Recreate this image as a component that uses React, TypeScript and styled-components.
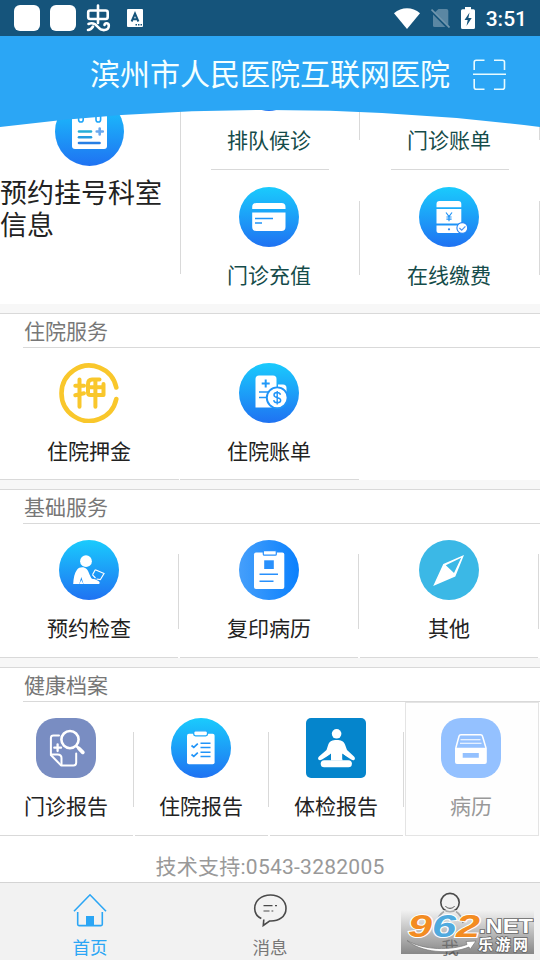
import React from 'react';
import styled, { createGlobalStyle } from 'styled-components';

const Global = createGlobalStyle`
  * { box-sizing: border-box; }
  body { margin: 0; background: #fff; font-family: Roboto, "Noto Sans CJK SC", sans-serif; }
  svg { display: block; }
`;

const LINE = '#d9d9d9';

const Screen = styled.div`
  width: 540px;
  height: 960px;
  display: flex;
  flex-direction: column;
  overflow: hidden;
  background: #fff;
`;

const StatusBar = styled.div`
  flex: none;
  height: 36px;
  display: flex;
  align-items: center;
  justify-content: space-between;
  padding: 0 13px 0 14px;
  background: #15547b;
  color: #fff;
`;

const StatusGroup = styled.div<{ $gap: number }>`
  display: flex;
  align-items: center;
  gap: ${p => p.$gap}px;
`;

const AppTile = styled.span`
  width: 26px;
  height: 26px;
  border-radius: 6px;
  background: #fff;
`;

const LetterSlot = styled.span`
  padding-left: 6px;
`;

const Clock = styled.span`
  font-size: 21px;
  font-weight: 500;
  line-height: 36px;
  padding-top: 2px;
`;

const Header = styled.header`
  position: relative;
  z-index: 1;
  flex: none;
  height: 74px;
  display: flex;
  align-items: center;
  padding: 4px 0 0 90px;
  gap: 23px;
  background: #2ba6f5;
`;

const Title = styled.h1`
  margin: 0;
  width: 360px;
  font-size: 30px;
  line-height: 70px;
  font-weight: 400;
  white-space: nowrap;
  color: #f4ffff;
`;

const Curve = styled.svg`
  position: absolute;
  left: 0;
  top: 73px;
`;

const Content = styled.main`
  flex: 1;
  min-height: 0;
  overflow: hidden;
`;

const Booking = styled.section`
  display: grid;
  grid-template-columns: 180px 360px;
  height: 269px;
  margin-top: -75px;
`;

const MainEntry = styled.div`
  display: flex;
  flex-direction: column;
  align-items: center;
  padding-top: 62px;
  padding-right: 1px;
  gap: 12px;
`;

const MainLabel = styled.div`
  width: 179px;
  font-size: 27px;
  line-height: 32px;
  color: #222;
`;

const BookingGrid = styled.div`
  display: grid;
  grid-template-columns: 180px 180px;
  grid-template-rows: 135px 134px;
  background: linear-gradient(${LINE}, ${LINE}) 0 0 / 1px 239px no-repeat;
`;

const Cell = styled.div<{ $top: number; $inset?: number; $lines: 'both' | 'bottom' | 'booking' | 'right' }>`
  display: flex;
  flex-direction: column;
  align-items: center;
  padding-top: ${p => p.$top}px;
  padding-right: ${p => p.$inset ?? 2}px;
  gap: 12.5px;
  background: ${p => {
    const fill = `linear-gradient(${LINE}, ${LINE})`;
    const bottom = `${fill} 0 100% / calc(100% - 2px) 1px no-repeat`;
    const side = `${fill} calc(100% - 1px) 30px / 1px 75px no-repeat`;
    if (p.$lines === 'both') return `${bottom}, ${side}`;
    if (p.$lines === 'bottom') return `${fill} 0 100% / calc(100% - 1px) 1px no-repeat`;
    if (p.$lines === 'booking') return `${fill} 31px 100% / 118px 1px no-repeat, ${fill} 100% 31px / 1px 74px no-repeat`;
    return `${fill} 100% 31px / 1px 74px no-repeat`;
  }};
`;

const Label = styled.span<{ $color?: string }>`
  font-size: 21px;
  line-height: 32px;
  white-space: nowrap;
  color: ${p => p.$color ?? '#222'};
`;

const Divider = styled.div`
  height: 10px;
  background: #f7f7f7;
  border-bottom: 1px solid ${LINE};
`;

const SectionTitle = styled.h2`
  margin: 0 0 0 23px;
  height: 34px;
  padding-left: 1px;
  border-bottom: 1px solid ${LINE};
  font-size: 21px;
  line-height: 37px;
  font-weight: 400;
  color: #777;
`;

const Row = styled.div<{ $cols: number; $h: number }>`
  display: grid;
  grid-template-columns: repeat(${p => p.$cols}, 1fr);
  height: ${p => p.$h}px;
`;

const DisabledCell = styled.div`
  display: flex;
  flex-direction: column;
  align-items: center;
  gap: 12.5px;
  padding: 15px 2px 0 0;
  margin-right: 1px;
  border: 1px solid #e4e4e4;
  background: #fefefe;
`;

const Support = styled.p`
  margin: 0;
  padding-top: 1px;
  text-align: center;
  font-size: 21px;
  line-height: 60px;
  letter-spacing: 0.25px;
  color: #999;
`;

const TabBar = styled.nav`
  position: relative;
  flex: none;
  height: 78px;
  display: grid;
  grid-template-columns: repeat(3, 180px);
  border-top: 1px solid #d4d4d4;
  background: #f2f2f2;
`;

const Tab = styled.div<{ $active?: boolean }>`
  display: flex;
  flex-direction: column;
  align-items: center;
  padding-top: 8px;
  gap: 8px;
  font-size: 17.5px;
  line-height: 26px;
  color: ${p => (p.$active ? '#2ba6f5' : '#777')};
`;

const Watermark = styled.div`
  position: absolute;
  left: 401px;
  top: 27px;
  width: 133px;
  height: 44px;
  background: linear-gradient(rgba(242, 242, 242, 0.6), rgba(70, 70, 70, 0.62));
`;

type Kids = { children?: React.ReactNode };

const Gradient = ({ id, from = '#1acbfd', to = '#1f72f2', flat = false }: { id: string; from?: string; to?: string; flat?: boolean }) => (
  <defs>
    <linearGradient id={id} x1="0" y1="0" x2={flat ? 1 : 0} y2={flat ? 0 : 1}>
      <stop offset="0" stopColor={from} />
      <stop offset="1" stopColor={to} />
    </linearGradient>
  </defs>
);

const Disc = ({ children }: Kids) => (
  <svg width="60" height="60" viewBox="0 0 60 60" fill="none">
    <Gradient id="disc" />
    <circle cx="30" cy="30" r="30" fill="url(#disc)" />
    {children}
  </svg>
);

const Tile = ({ color, rx, children }: Kids & { color: string; rx: number }) => (
  <svg width="60" height="60" viewBox="0 0 60 60" fill="none">
    <rect width="60" height="60" rx={rx} fill={color} />
    {children}
  </svg>
);

const CalendarIcon = () => (
  <svg width="69" height="69" viewBox="0 0 69 69" fill="none">
    <Gradient id="cal" />
    <circle cx="34.5" cy="34.5" r="34.5" fill="url(#cal)" />
    <rect x="17" y="17" width="35" height="35" rx="3" fill="#fff" />
    <g fill="#fff" stroke="#1da5f9" strokeWidth="1.6">
      <rect x="23.6" y="13" width="4.6" height="12" rx="2.3" />
      <rect x="41" y="13" width="4.6" height="12" rx="2.3" />
    </g>
    <g strokeWidth="2.6" strokeLinecap="round">
      <path d="M24 34.5H36" stroke="#25aed8" />
      <path d="M24 40.3H36" stroke="#249bdf" />
      <path d="M24 46H44.5" stroke="#287fe4" />
      <path d="M41.7 34.5H47.8M44.7 31.5V37.5" stroke="#69a8ee" />
    </g>
  </svg>
);

const QueueIcon = () => (
  <svg width="60" height="60" viewBox="0 0 60 60">
    <Gradient id="queue" />
    <circle cx="30" cy="29.7" r="29.2" fill="url(#queue)" />
  </svg>
);

const CardIcon = () => (
  <Disc>
    <path d="M13.2 22V20a4 4 0 0 1 4-4H42.5a4 4 0 0 1 4 4V22Z" fill="#fff" />
    <path d="M13.2 25.5H46.5V40a4 4 0 0 1-4 4H17.2a4 4 0 0 1-4-4Z" fill="#fff" />
    <path d="M16 31.5H34M16 36H23" stroke="#2094f8" strokeWidth="1.5" />
  </Disc>
);

const PayIcon = () => (
  <Disc>
    <path d="M17.5 20.3V17a3 3 0 0 1 3-3H39.3a3 3 0 0 1 3 3V20.3ZM17.5 22H42.3V36.5H17.5ZM17.5 38.5H42.3V46H19.5a2 2 0 0 1-2-2Z" fill="#fff" />
    <path d="M27 25.5L30 29.5L33 25.5M30 29.5V34.3M27.4 30H32.6M27.4 32.2H32.6" stroke="#2094f8" strokeWidth="1.2" />
    <circle cx="30" cy="42.3" r="1.1" fill="#2584f5" />
    <circle cx="43.3" cy="41" r="5.4" fill="#fff" stroke="#2584f5" strokeWidth="1.1" />
    <path d="M40.4 41L42.7 43.2L46.4 39.3" stroke="#4b92f2" strokeWidth="1.2" />
  </Disc>
);

const DepositIcon = () => (
  <svg width="60" height="60" viewBox="0 0 60 60" fill="none" stroke="#f9c72b" strokeLinecap="round" strokeLinejoin="round">
    <path d="M57.3 24.5A27.7 27.7 0 1 0 57.3 36" strokeWidth="4.6" />
    <g strokeWidth="4">
      <path d="M20.5 16.5V43.7M16.3 22.7H25M16.3 32.3L25 30.3" />
      <path d="M44.5 21V32H31.5C29.5 32 29 31 29 29.5V21C29 18 30.5 16.5 33 16.5H40.5M29 24.3H44.5M36.4 17V43.7" />
    </g>
  </svg>
);

const BillIcon = () => (
  <Disc>
    <path d="M16.5 44.5V16a3.5 3.5 0 0 1 3.5-3.5H34a3.5 3.5 0 0 1 3.5 3.5V44.5Z" fill="#fff" />
    <path d="M39 21.5H44a3.5 3.5 0 0 1 3.5 3.5V34H39Z" fill="#fff" />
    <path d="M22.7 20.5H30.7M26.7 16.5V24.5" stroke="#2199f8" strokeWidth="2" />
    <path d="M20 29H29M20 34.5H28" stroke="#2094f8" strokeWidth="1.7" />
    <circle cx="38.2" cy="34.8" r="10.4" fill="#fff" stroke="#2094f8" strokeWidth="1.9" />
    <path d="M41.5 31.7C41 30 39.8 29.5 38.2 29.5C36.3 29.5 35 30.5 35 32C35 35.8 41.7 33.6 41.7 37.3C41.7 39 40.2 39.8 38.2 39.8C36.3 39.8 35 38.9 34.7 37.2M38.2 28V41.5" stroke="#2094f8" strokeWidth="1.4" />
  </Disc>
);

const ExamIcon = () => (
  <Disc>
    <circle cx="27" cy="21.2" r="5.9" fill="#fff" />
    <path d="M14.2 44C14.5 38 15.5 33 18 29.8C20.5 26.7 25 26.7 27.6 29C30 31.5 31 37 33 38.8L36 39.3L39 40.7C41.3 41.8 41 44 39.3 44H24.5L22.3 37L20.3 44Z" fill="#fff" />
    <path d="M20.3 44H24.5L22.3 40Z" fill="#fff" />
    <path d="M36.3 29.7L45 33.5L41.3 39.7L37.5 39M33.5 34.8L36.3 29.7M33.5 34.8L36.5 38" stroke="#fff" strokeWidth="1.2" />
  </Disc>
);

const CopyIcon = () => (
  <svg width="60" height="60" viewBox="0 0 60 60" fill="none">
    <Gradient id="copy" from="#459ffb" to="#0a80fd" flat />
    <circle cx="30" cy="30" r="30" fill="url(#copy)" />
    <rect x="15" y="12.5" width="30.3" height="36.5" rx="2" fill="#fff" />
    <rect x="24.3" y="10.6" width="13" height="4.6" rx="1" fill="#fff" stroke="#2890fc" strokeWidth="1.2" />
    <rect x="25.2" y="20.3" width="9.6" height="8.7" fill="#2890fc" />
    <path d="M20.5 34.2H39M20.5 41.2H34.5" stroke="#2890fc" strokeWidth="1.6" />
  </svg>
);

const CompassIcon = () => (
  <Tile color="#3bb8e6" rx={30}>
    <path fillRule="evenodd" d="M45 15L24.3 24L14.2 46L36.3 36.6ZM42.2 17.8L26.8 25.2L35 33Z" fill="#fff" />
  </Tile>
);

const ClinicReportIcon = () => (
  <Tile color="#798dc2" rx={20}>
    <g stroke="#fff" strokeWidth="2" strokeLinecap="round" strokeLinejoin="round">
      <path d="M23 17.6H17.5C15.5 17.6 14.9 18.5 14.9 20V37L25 47.4H37.5C39.5 47.4 40.2 46.5 40.2 44.5V35.5" />
      <path d="M15 36.5H21.5C24 36.5 25.5 38 25.5 40V47" />
      <path d="M18.3 29.7H25M21.6 26.3V33" strokeWidth="2.3" />
      <circle cx="34" cy="21.6" r="8.6" strokeWidth="2.6" />
      <path d="M40.3 28L42.5 30" strokeWidth="2.5" />
      <path d="M43 30.5L46.8 34.3" strokeWidth="3.8" />
    </g>
  </Tile>
);

const WardReportIcon = () => (
  <Disc>
    <rect x="16" y="15.7" width="27.6" height="30.5" rx="2" fill="#fff" />
    <rect x="22.7" y="12.8" width="13.8" height="5" rx="1.8" fill="#fff" stroke="#1fa9fa" strokeWidth="1.3" />
    <path d="M20.5 27.5L22.8 29.3L26.8 25.7M20.5 36.5L22.8 38.3L26.8 34.7" stroke="#2094f8" strokeWidth="1.7" />
    <path d="M29.5 25.3H39.5M29.5 29.5H39.5M29.5 34.3H39.5M29.5 38.5H39.5" stroke="#2094f8" strokeWidth="1.5" />
  </Disc>
);

const CheckupIcon = () => (
  <Tile color="#0585cc" rx={5}>
    <circle cx="30.6" cy="15.8" r="4.8" fill="#fff" />
    <path d="M30.6 22C35 22 37.5 23 39 26.5L41 32L48 38.5C50.3 41 48 43.5 45.2 41.5L36.6 36V42.5H25V36L16 41.5C13 43.3 10.8 41 13 38.5L20.5 32L22.3 26.5C23.8 23 26.3 22 30.6 22Z" fill="#fff" />
    <rect x="14.7" y="42.2" width="31.2" height="7" rx="3.5" fill="#fff" />
    <path d="M25 35.5L18 41.5H25ZM36.3 35.5L43.3 41.5H36.3Z" fill="#0585cc" />
  </Tile>
);

const RecordIcon = () => (
  <Tile color="#94c1ff" rx={20}>
    <path d="M14.8 30L18 18.2C18.3 17 19 16.7 20 16.7H39.5C40.5 16.7 41.2 17 41.5 18.2L45 30" stroke="#fff" strokeWidth="1.5" />
    <path d="M19.5 21.7H39.5M19 25.2H40.5" stroke="#fff" strokeWidth="1.1" />
    <path fillRule="evenodd" d="M14 29.7H45.8V44a2 2 0 0 1-2 2H16a2 2 0 0 1-2-2ZM21.7 35V39.8H37.8V35Z" fill="#fff" />
  </Tile>
);

const ScanIcon = () => (
  <svg width="33" height="32" viewBox="0 0 33 32" fill="none" stroke="#e8fbff" strokeWidth="1.6">
    <path d="M1.2 11V3.2C1.2 2 2 1.2 3.2 1.2H11.5M21 1.2H29.5C30.8 1.2 31.5 2 31.5 3.2V11M1.2 20V28.3C1.2 29.5 2 30.3 3.2 30.3H11.5M21 30.3H29.5C30.8 30.3 31.5 29.5 31.5 28.3V20M0 15.3H33" />
  </svg>
);

const BugIcon = () => (
  <svg width="25" height="28" viewBox="0 0 25 28" fill="none" stroke="#fff" strokeWidth="2.6" strokeLinecap="round">
    <rect x="2.2" y="6.5" width="19.5" height="8.5" rx="2" />
    <path d="M12 1.5V19M2.5 20C7 18 10 20.5 12 23C15.5 27.5 22.5 27 22.8 22C23 18.8 19 18.3 18.5 21M2 26C4 26 5.5 25 7 22.5" />
  </svg>
);

const LetterIcon = () => (
  <svg width="16" height="18" viewBox="0 0 16 18">
    <rect width="16" height="18" rx="1" fill="#fff" />
    <path d="M4.6 12.5L8 4.5L11.4 12.5M5.8 10.2H10.2" fill="none" stroke="#15547b" strokeWidth="2" />
    <path d="M8.5 15.7H15" stroke="#15547b" strokeWidth="1.4" strokeDasharray="1.5 1" />
  </svg>
);

const WifiIcon = () => (
  <svg width="26" height="21" viewBox="0 0 26 21"><path d="M0 5.3C7.5-1.3 18.5-1.3 26 5.3L13 21Z" fill="#fff" /></svg>
);

const SimIcon = () => (
  <svg width="19" height="20" viewBox="0 0 19 20">
    <path d="M7.5 1H15.5a1.8 1.8 0 0 1 1.8 1.8V19H3.5a1.5 1.5 0 0 1-1.5-1.5V6Z" fill="#5b87a3" />
    <path d="M0 2.5L17.5 20" stroke="#15547b" strokeWidth="3" />
    <path d="M0.5 1.5L18.5 19.5" stroke="#7297ae" strokeWidth="1.7" />
  </svg>
);

const BatteryIcon = () => (
  <svg width="14" height="22" viewBox="0 0 14 22">
    <path d="M4 0H10V2.2H12.5A1.5 1.5 0 0 1 14 3.7V20.5A1.5 1.5 0 0 1 12.5 22H1.5A1.5 1.5 0 0 1 0 20.5V3.7A1.5 1.5 0 0 1 1.5 2.2H4Z" fill="#fff" />
    <path d="M8.5 5.5L3.5 13H6.7L5.5 19L10.7 11H7.4Z" fill="#15547b" />
  </svg>
);

const HomeIcon = () => (
  <svg width="36" height="36" viewBox="0 0 36 36" fill="none" stroke="#2ba6f5" strokeWidth="1.6">
    <path d="M2 20.3L18 3.8L34 20.3M5.7 21V33.3Q5.7 34.6 7 34.6H29Q30.3 34.6 30.3 33.3V21" />
    <rect x="14" y="25" width="8" height="10" fill="#2ba6f5" stroke="none" />
  </svg>
);

const MessageIcon = () => (
  <svg width="36" height="36" viewBox="0 0 36 36" fill="none" stroke="#4a4a4a" strokeWidth="1.6">
    <path d="M9.3 27.5C5 25.5 2.7 21.5 2.7 17.5C2.7 9.5 9.5 4 18.5 4C27.5 4 34 9.5 34 17.5C34 25.5 27 30.5 17.5 30L11.3 34.5L11.8 28.5" />
    <path d="M11.5 14.7H20.5M23 14.7H25M11.5 20H17.5M19.5 20H21.3" strokeWidth="1.2" />
  </svg>
);

const MeIcon = () => (
  <svg width="36" height="36" viewBox="0 0 36 36" fill="none" stroke="#4a4a4a" strokeWidth="1.6">
    <circle cx="18" cy="11.6" r="9.2" />
    <path d="M13.5 15.2C15.5 18 20.5 18 22.5 15.2" strokeWidth="1" />
    <path d="M12 20.5C8 23 5.5 27 5 32M24 20.5C27 22.5 30 26 31 32" />
  </svg>
);

const WatermarkArt = () => (
  <svg width="133" height="44" viewBox="0 0 133 44">
    <g fontFamily="Liberation Sans, sans-serif" fontWeight="700" fontStyle="italic" fontSize="32" stroke="#fff" strokeWidth="2" paintOrder="stroke">
      <text x="7" y="27.3" textLength="24" lengthAdjust="spacingAndGlyphs" fill="#f38c22">9</text>
      <text x="31" y="27.3" textLength="24" lengthAdjust="spacingAndGlyphs" fill="#50aade">6</text>
      <text x="55" y="27.3" textLength="24" lengthAdjust="spacingAndGlyphs" fill="#f38c22">2</text>
    </g>
    <path d="M6 30.5C23 40.5 50 40.5 66 34.5L65 31.5L75 31L69 39.5L68 37C48 45 20 42.5 6 30.5Z" fill="#fff" stroke="#777" strokeWidth="0.7" />
    <g fill="#fff" stroke="#666" strokeWidth="1.6" paintOrder="stroke" fontWeight="700">
      <text x="78" y="22.8" fontFamily="Liberation Sans, sans-serif" fontSize="20" textLength="54" lengthAdjust="spacingAndGlyphs">.NET</text>
      <text x="77" y="40" fontFamily="Noto Sans CJK SC, sans-serif" fontSize="15" textLength="50">乐游网</text>
    </g>
  </svg>
);

const TEAL = '#154c4a';

const bookingItems = [
  { label: '排队候诊', icon: <QueueIcon />, lines: 'booking' as const },
  { label: '门诊账单', icon: <svg width="60" height="60" />, lines: 'booking' as const },
  { label: '门诊充值', icon: <CardIcon />, lines: 'right' as const },
  { label: '在线缴费', icon: <PayIcon />, lines: 'right' as const },
];

const basicItems = [
  { label: '预约检查', icon: <ExamIcon /> },
  { label: '复印病历', icon: <CopyIcon /> },
  { label: '其他', icon: <CompassIcon /> },
];

const archiveItems = [
  { label: '门诊报告', icon: <ClinicReportIcon /> },
  { label: '住院报告', icon: <WardReportIcon /> },
  { label: '体检报告', icon: <CheckupIcon /> },
];

export default function App() {
  return (
    <Screen>
      <Global />
      <StatusBar>
        <StatusGroup $gap={10}>
          <AppTile />
          <AppTile />
          <BugIcon />
          <LetterSlot><LetterIcon /></LetterSlot>
        </StatusGroup>
        <StatusGroup $gap={11}>
          <WifiIcon />
          <SimIcon />
          <BatteryIcon />
          <Clock>3:51</Clock>
        </StatusGroup>
      </StatusBar>
      <Header>
        <Title>滨州市人民医院互联网医院</Title>
        <ScanIcon />
        <Curve width="540" height="18" viewBox="0 0 540 18">
          <path d="M0 0H540V18Q270-16 0 18Z" fill="#2ba6f5" />
        </Curve>
      </Header>
      <Content>
        <Booking>
          <MainEntry>
            <CalendarIcon />
            <MainLabel>预约挂号科室信息</MainLabel>
          </MainEntry>
          <BookingGrid>
            {bookingItems.map(it => (
              <Cell key={it.label} $top={17} $lines={it.lines}>
                {it.icon}
                <Label $color={TEAL}>{it.label}</Label>
              </Cell>
            ))}
          </BookingGrid>
        </Booking>
        <Divider />
        <SectionTitle>住院服务</SectionTitle>
        <Row $cols={3} $h={132}>
          <Cell $top={15} $lines="bottom"><DepositIcon /><Label>住院押金</Label></Cell>
          <Cell $top={15} $lines="bottom"><BillIcon /><Label>住院账单</Label></Cell>
        </Row>
        <Divider />
        <SectionTitle>基础服务</SectionTitle>
        <Row $cols={3} $h={134}>
          {basicItems.map(it => (
            <Cell key={it.label} $top={16} $lines="both">{it.icon}<Label>{it.label}</Label></Cell>
          ))}
        </Row>
        <Divider />
        <SectionTitle>健康档案</SectionTitle>
        <Row $cols={4} $h={134}>
          {archiveItems.map(it => (
            <Cell key={it.label} $top={16} $inset={3} $lines="both">{it.icon}<Label>{it.label}</Label></Cell>
          ))}
          <DisabledCell><RecordIcon /><Label $color="#999">病历</Label></DisabledCell>
        </Row>
        <Support>技术支持:0543-3282005</Support>
      </Content>
      <TabBar>
        <Tab $active><HomeIcon />首页</Tab>
        <Tab><MessageIcon />消息</Tab>
        <Tab><MeIcon />我</Tab>
        <Watermark><WatermarkArt /></Watermark>
      </TabBar>
    </Screen>
  );
}
